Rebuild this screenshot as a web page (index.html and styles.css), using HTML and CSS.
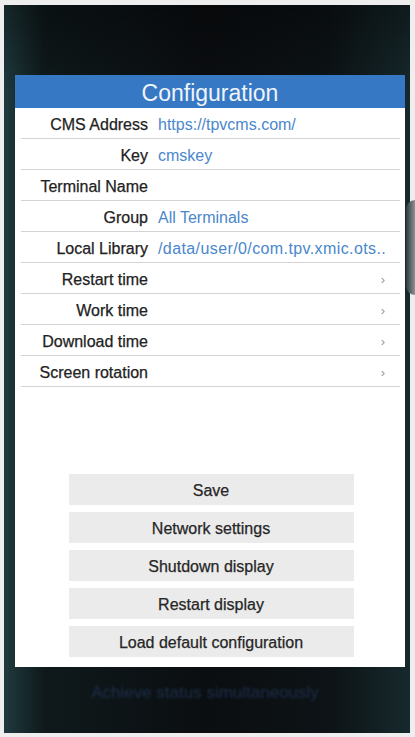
FILE: index.html
```html
<!DOCTYPE html>
<html lang="en">
<head>
<meta charset="utf-8">
<title>Configuration</title>
<link rel="stylesheet" href="styles.css">
</head>
<body>
<div class="screen">
  <div class="dialog">
    <div class="header">Configuration</div>
    <div class="rows">
      <div class="row"><span class="label">CMS Address</span><span class="value">https://tpvcms.com/</span></div>
      <div class="row"><span class="label">Key</span><span class="value">cmskey</span></div>
      <div class="row"><span class="label">Terminal Name</span><span class="value"></span></div>
      <div class="row"><span class="label">Group</span><span class="value">All Terminals</span></div>
      <div class="row"><span class="label">Local Library</span><span class="value long">/data/user/0/com.tpv.xmic.ots..</span></div>
      <div class="row"><span class="label">Restart time</span><span class="value"></span><span class="chev">&#8250;</span></div>
      <div class="row"><span class="label">Work time</span><span class="value"></span><span class="chev">&#8250;</span></div>
      <div class="row"><span class="label">Download time</span><span class="value"></span><span class="chev">&#8250;</span></div>
      <div class="row"><span class="label">Screen rotation</span><span class="value"></span><span class="chev">&#8250;</span></div>
    </div>
    <div class="buttons">
      <div class="btn">Save</div>
      <div class="btn">Network settings</div>
      <div class="btn">Shutdown display</div>
      <div class="btn">Restart display</div>
      <div class="btn">Load default configuration</div>
    </div>
  </div>
  <div class="status">Achieve status simultaneously</div>
  <div class="edge"></div>
</div>
</body>
</html>
```
FILE: styles.css
```css
html, body {
  margin: 0;
  padding: 0;
}
body {
  background: #eeeeee;
  width: 415px;
  height: 737px;
  overflow: hidden;
  font-family: "Liberation Sans", Arial, sans-serif;
}
.screen {
  position: relative;
  margin: 5px 5px 0 4px;
  height: 728px;
  box-sizing: border-box;
  padding: 70px 5px 0 11px;
  background:
    linear-gradient(180deg, rgba(0,0,0,0.35) 0%, rgba(0,0,0,0) 12%),
    linear-gradient(90deg, #1f3a3e 0%, #0f191b 10%, #0b0e11 50%, #0d1316 80%, #16292c 100%);
}
.dialog {
  background: #ffffff;
  display: flex;
  flex-direction: column;
  padding-bottom: 10px;
}
.header {
  height: 33px;
  background: #3678c3;
  color: #eef4fb;
  font-size: 23px;
  line-height: 36px;
  text-align: center;
}
.rows {
  display: flex;
  flex-direction: column;
}
.row {
  height: 30px;
  box-sizing: border-box;
  padding-top: 3px;
  margin: 0 5px 0 6px;
  border-bottom: 1px solid #d4d4d4;
  display: grid;
  grid-template-columns: 127px 1fr auto;
  column-gap: 10px;
  align-items: center;
  font-size: 16px;
  padding-right: 14px;
}
.row {
  height: 31px;
}
.label {
  text-align: right;
  color: #222222;
  white-space: nowrap;
  -webkit-text-stroke: 0.25px #222222;
}
.value {
  color: #4a87cc;
  white-space: nowrap;
  font-size: 16px;
}
.long {
  letter-spacing: 0.4px;
}
.chev {
  color: #9a9a9a;
  font-size: 13px;
  margin-right: 1px;
}
.buttons {
  margin-top: 87px;
  display: flex;
  flex-direction: column;
  align-items: center;
  gap: 7px;
  padding-left: 2px;
}
.btn {
  width: 285px;
  height: 31px;
  line-height: 33px;
  background: #ebebeb;
  color: #262626;
  font-size: 16px;
  text-align: center;
  -webkit-text-stroke: 0.25px #262626;
}
.status {
  margin-top: 16px;
  text-align: center;
  color: #1d2f4c;
  font-size: 17px;
  filter: blur(1px);
  padding-right: 10px;
}
.edge {
  position: absolute;
  right: -5px;
  top: 195px;
  width: 9px;
  height: 95px;
  border-radius: 9px 0 0 9px;
  background: linear-gradient(90deg, #2a3a3c, #8c9294);
}
```
